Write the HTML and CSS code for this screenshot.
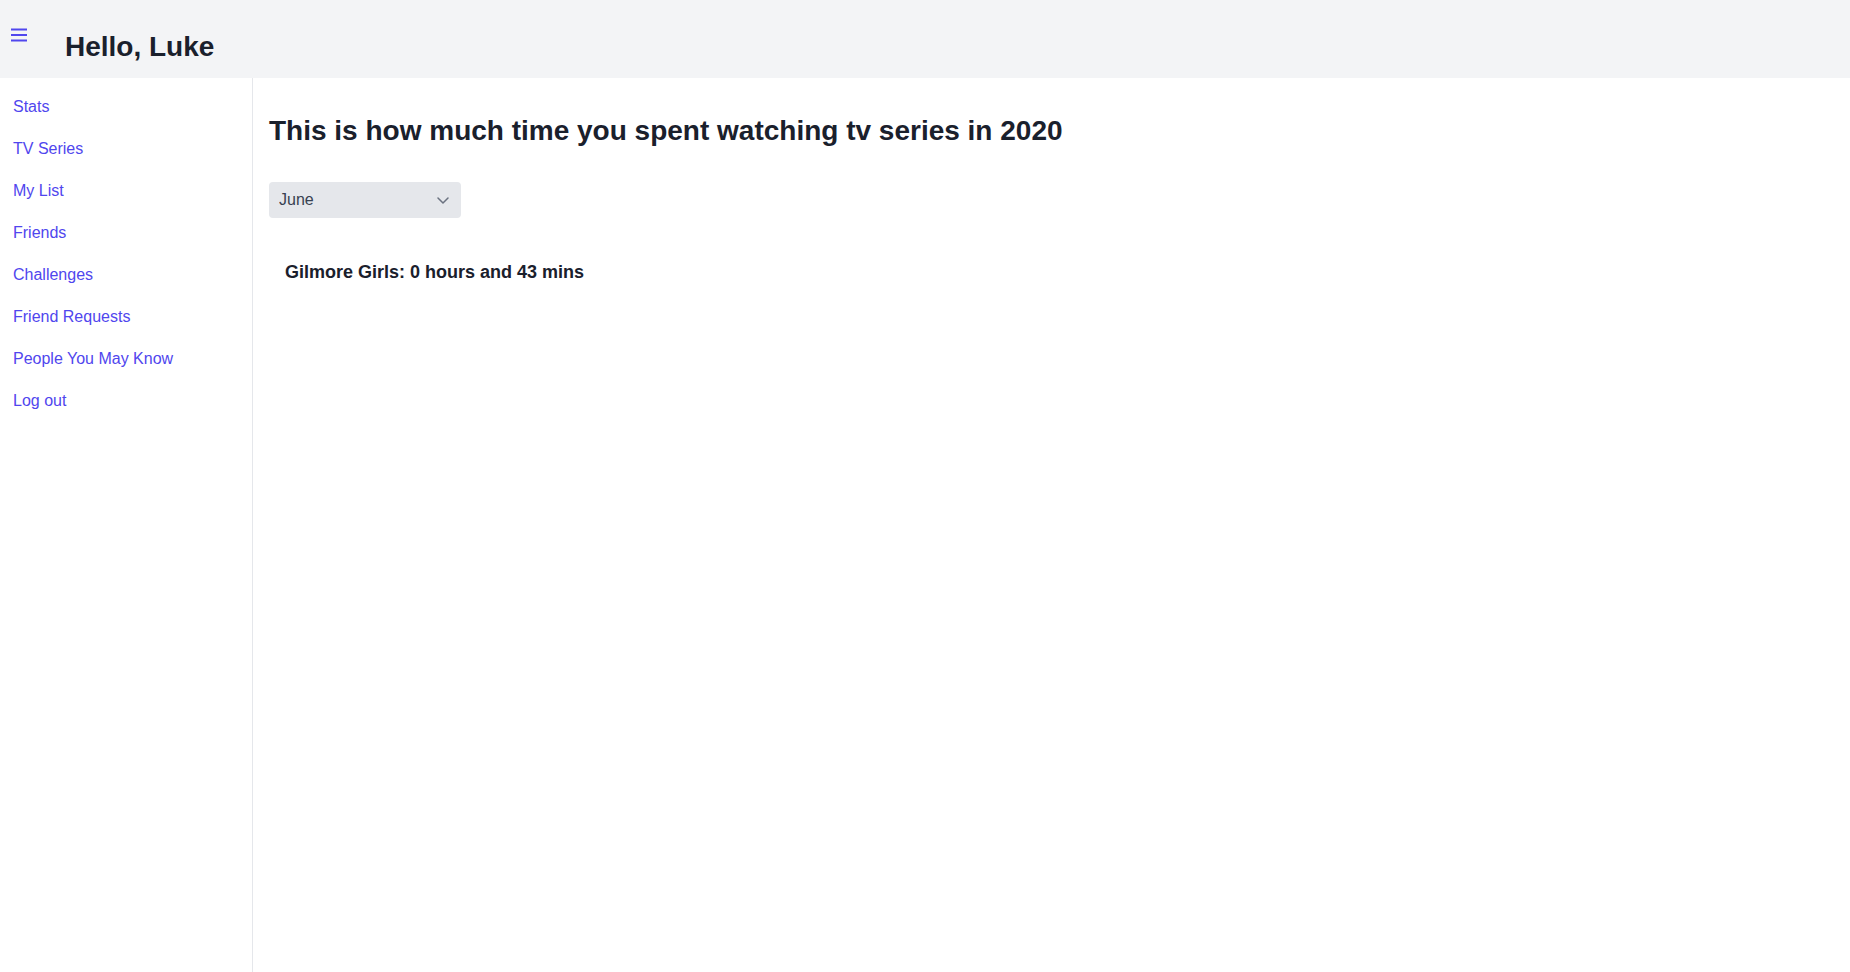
FILE: index.html
```html
<!DOCTYPE html>
<html lang="en">
<head>
<meta charset="utf-8">
<title>Hello, Luke</title>
<link rel="stylesheet" href="styles.css">
</head>
<body>
<div class="app">
  <header class="topbar">
    <button class="menu-btn" aria-label="Menu">
      <svg width="20" height="20" viewBox="0 0 20 20" fill="none" stroke="currentColor" stroke-width="2">
        <path d="M2 4.5h16M2 10h16M2 15.5h16"/>
      </svg>
    </button>
    <h1 class="greeting">Hello, Luke</h1>
  </header>
  <div class="body">
    <nav class="sidebar">
      <a href="#" class="nav-link">Stats</a>
      <a href="#" class="nav-link">TV Series</a>
      <a href="#" class="nav-link">My List</a>
      <a href="#" class="nav-link">Friends</a>
      <a href="#" class="nav-link">Challenges</a>
      <a href="#" class="nav-link">Friend Requests</a>
      <a href="#" class="nav-link">People You May Know</a>
      <a href="#" class="nav-link">Log out</a>
    </nav>
    <main class="content">
      <h2 class="title">This is how much time you spent watching tv series in 2020</h2>
      <div class="select-wrap">
        <select class="month-select">
          <option>January</option>
          <option>February</option>
          <option>March</option>
          <option>April</option>
          <option>May</option>
          <option selected>June</option>
          <option>July</option>
          <option>August</option>
          <option>September</option>
          <option>October</option>
          <option>November</option>
          <option>December</option>
        </select>
        <svg class="chevron" width="12" height="7" viewBox="0 0 12 7" fill="none" stroke="currentColor" stroke-width="1.5" stroke-linecap="round" stroke-linejoin="round">
          <path d="M1 1l5 5 5-5"/>
        </svg>
      </div>
      <ul class="series-list">
        <li class="series-item">Gilmore Girls: 0 hours and 43 mins</li>
      </ul>
    </main>
  </div>
</div>
</body>
</html>
```
FILE: styles.css
```css
* { box-sizing: border-box; }
html, body { height: 100%; }
body {
  margin: 0;
  font-family: "Liberation Sans", Arial, sans-serif;
  color: #111827;
  background: #ffffff;
}
.app {
  display: flex;
  flex-direction: column;
  min-height: 100vh;
}
.topbar {
  height: 78px;
  background: #f3f4f6;
  display: flex;
  align-items: flex-start;
  padding: 25px 0 0 9px;
  flex-shrink: 0;
}
.menu-btn {
  border: 0;
  background: none;
  padding: 0;
  width: 20px;
  height: 20px;
  color: #5046ee;
  display: block;
  cursor: pointer;
}
.menu-btn svg { display: block; }
.greeting {
  margin: 1px 0 0 36px;
  font-size: 28px;
  line-height: 42px;
  font-weight: 700;
  color: #1a202c;
}
.body {
  flex: 1;
  display: flex;
}
.sidebar {
  width: 253px;
  flex-shrink: 0;
  border-right: 1px solid #e5e7eb;
  display: flex;
  flex-direction: column;
  padding-top: 8px;
}
.nav-link {
  display: block;
  padding: 9px 13px;
  font-size: 16px;
  line-height: 24px;
  color: #5046ee;
  text-decoration: none;
}
.content {
  flex: 1;
  padding: 32px 16px;
}
.title {
  margin: 0;
  font-size: 28px;
  line-height: 42px;
  font-weight: 700;
  color: #1a202c;
}
.select-wrap {
  position: relative;
  width: 192px;
  margin-top: 30px;
}
.month-select {
  appearance: none;
  -webkit-appearance: none;
  display: block;
  width: 100%;
  height: 36px;
  border: 0;
  border-radius: 4px;
  background: #e5e7eb;
  padding: 0 32px 1px 10px;
  font-family: "Liberation Sans", Arial, sans-serif;
  font-size: 16px;
  color: #374151;
  outline: none;
}
.chevron {
  position: absolute;
  right: 12px;
  top: 15px;
  color: #6b7280;
  pointer-events: none;
}
.series-list {
  list-style: none;
  margin: 40px 0 0;
  padding: 0 0 0 16px;
}
.series-item {
  font-size: 18px;
  line-height: 28px;
  font-weight: 700;
  color: #1a202c;
}
```
